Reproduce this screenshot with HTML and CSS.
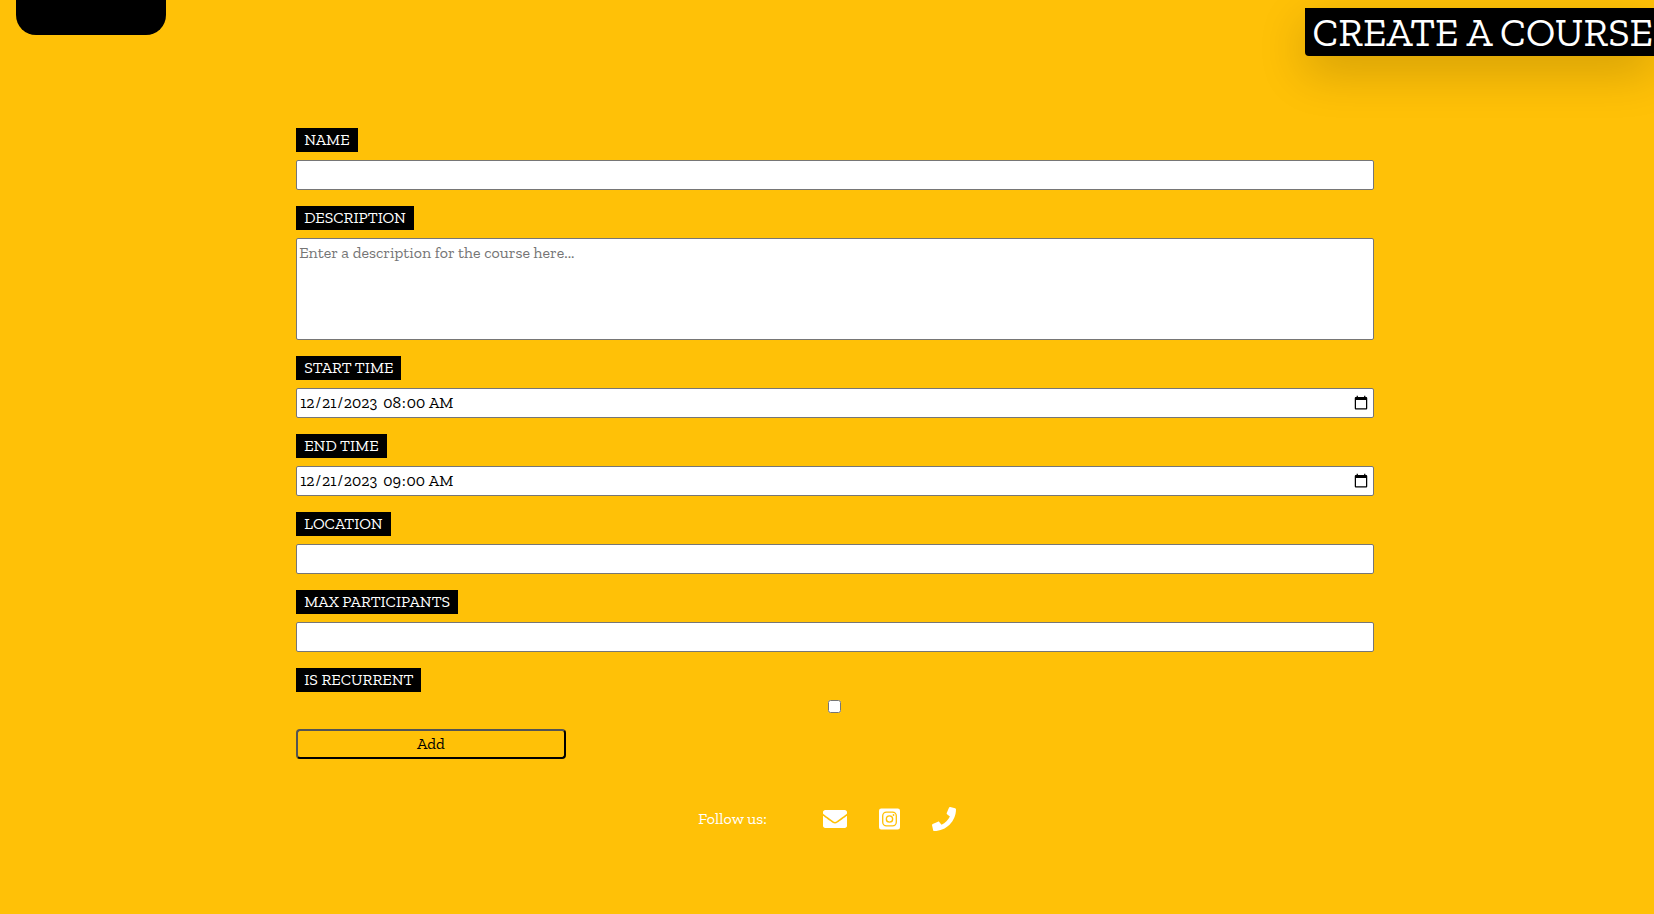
FILE: index.html
```
<!DOCTYPE html>
<html lang="en-US">
<head>
<meta charset="utf-8">
<meta name="viewport" content="width=device-width, initial-scale=1">
<title>Create a course</title>
<link rel="stylesheet" href="styles.css">
</head>
<body>
<header class="header">
  <div class="header-tab"></div>
  <h1 class="title">CREATE A COURSE</h1>
</header>
<main class="main">
  <form class="form">
    <div class="field">
      <label class="label" for="name">NAME</label>
      <input class="control" type="text" id="name">
    </div>
    <div class="field">
      <label class="label" for="description">DESCRIPTION</label>
      <textarea class="control" id="description" rows="4" placeholder="Enter a description for the course here..."></textarea>
    </div>
    <div class="field">
      <label class="label" for="start">START TIME</label>
      <input class="control" type="datetime-local" id="start" value="2023-12-21T08:00">
    </div>
    <div class="field">
      <label class="label" for="end">END TIME</label>
      <input class="control" type="datetime-local" id="end" value="2023-12-21T09:00">
    </div>
    <div class="field">
      <label class="label" for="location">LOCATION</label>
      <input class="control" type="text" id="location">
    </div>
    <div class="field">
      <label class="label" for="max">MAX PARTICIPANTS</label>
      <input class="control" type="number" id="max">
    </div>
    <div class="field">
      <label class="label" for="recurrent">IS RECURRENT</label>
      <input class="check" type="checkbox" id="recurrent">
    </div>
    <button class="submit" type="submit">Add</button>
  </form>
</main>
<footer class="footer">
  <span>Follow us:</span>
  <nav class="social">
    <a href="#" aria-label="Email"><svg class="icon" viewBox="0 0 512 512"><path d="M502.3 190.8c3.9-3.1 9.7-.2 9.7 4.7V400c0 26.5-21.5 48-48 48H48c-26.5 0-48-21.5-48-48V195.6c0-5 5.7-7.8 9.7-4.7 22.4 17.4 52.1 39.5 154.1 113.6 21.1 15.4 56.7 47.8 92.2 47.6 35.7.3 72-32.8 92.3-47.6 102-74.1 131.6-96.3 154-113.7zM256 320c23.2.4 56.6-29.2 73.4-41.4 132.7-96.3 142.8-104.7 173.4-128.7 5.8-4.5 9.2-11.5 9.2-18.9v-19c0-26.5-21.5-48-48-48H48c-26.5 0-48 21.5-48 48v19c0 7.4 3.4 14.3 9.2 18.9 30.6 23.9 40.7 32.4 173.4 128.7 16.8 12.2 50.2 41.8 73.4 41.4z"/></svg></a>
    <a href="#" aria-label="Instagram"><svg class="icon" viewBox="0 0 448 512"><path fill-rule="evenodd" d="M48 32H400A48 48 0 0 1 448 80V432A48 48 0 0 1 400 480H48A48 48 0 0 1 0 432V80A48 48 0 0 1 48 32Z M158 97A93 93 0 0 0 65 190V322A93 93 0 0 0 158 415H290A93 93 0 0 0 383 322V190A93 93 0 0 0 290 97Z M162 125H286A69 69 0 0 1 355 194V318A69 69 0 0 1 286 387H162A69 69 0 0 1 93 318V194A69 69 0 0 1 162 125Z M224 174A82 82 0 1 0 224 338A82 82 0 1 0 224 174Z M224 202.700A53.300 53.300 0 1 1 224 309.300A53.300 53.300 0 1 1 224 202.700Z M309.400 151.500A19.100 19.100 0 1 0 309.400 189.700A19.100 19.100 0 1 0 309.400 151.500Z"/></svg></a>
    <a href="#" aria-label="Phone"><svg class="icon" viewBox="0 0 512 512"><path d="M493.4 24.6l-104-24c-11.3-2.6-22.9 3.3-27.5 13.9l-48 112c-4.2 9.8-1.4 21.3 6.9 28l60.6 49.6c-36 76.7-98.9 140.5-177.2 177.2l-49.6-60.6c-6.8-8.3-18.2-11.1-28-6.9l-112 48C3.9 366.5-2 378.1.6 389.4l24 104C27.1 504.2 36.7 512 48 512c256.1 0 464-207.5 464-464 0-11.2-7.7-20.9-18.6-23.4z"/></svg></a>
  </nav>
</footer>
</body>
</html>
```
FILE: styles.css
```
* {
  box-sizing: border-box;
}

body {
  margin: 0;
  background: #ffc107;
  font-family: "Zilla Slab", "DejaVu Serif Condensed", "Liberation Serif", serif;
  font-size: 16px;
  line-height: 24px;
  color: #000;
}

.header {
  display: flex;
  justify-content: space-between;
  align-items: flex-start;
  padding-left: 16px;
}

.header-tab {
  width: 150px;
  height: 35px;
  border-radius: 0 0 20px 20px;
  background: #000;
}

.title {
  margin: 8px 0 0;
  padding: 0 1px 0 8px;
  border-radius: 0 0 0 4px;
  background: #000;
  box-shadow: 0 16px 48px rgba(0, 0, 0, 0.175);
  color: #fff;
  font-size: 40px;
  font-weight: 400;
  line-height: 48px;
  white-space: nowrap;
}

.main {
  display: grid;
  grid-template-columns: 26fr 100fr 26fr;
  padding: 72px 0 0 16px;
}

.form {
  grid-column: 2;
  display: flex;
  flex-direction: column;
  gap: 16px;
}

.field {
  display: flex;
  flex-direction: column;
  align-items: flex-start;
  gap: 8px;
}

.label {
  padding: 0 8px;
  background: #000;
  color: #fff;
}

.control {
  display: block;
  width: 100%;
  margin: 0;
  padding: 2px;
  border: 1px solid #767676;
  border-radius: 2px;
  background: #fff;
  color: #000;
  font: inherit;
  resize: none;
}

input.control {
  height: 30px;
}

/* The hour field covers the separator comma after the year. */
.control::-webkit-datetime-edit-hour-field {
  margin-left: -8px;
  padding-left: 6px;
  background: #fff;
}

.control::placeholder {
  color: #757575;
}

.check {
  align-self: center;
  width: 13px;
  height: 13px;
  margin: 0;
}

.submit {
  width: 25%;
  padding: 1px 6px;
  border: 2px outset #000;
  border-radius: 4px;
  background: transparent;
  color: #000;
  font: inherit;
}

.footer {
  display: flex;
  justify-content: center;
  align-items: center;
  gap: 56px;
  padding: 48px 0;
  color: #fff;
}

.social {
  display: flex;
  gap: 32px;
}

.social a {
  display: flex;
  color: inherit;
}

.icon {
  height: 24px;
  fill: currentColor;
}
```
